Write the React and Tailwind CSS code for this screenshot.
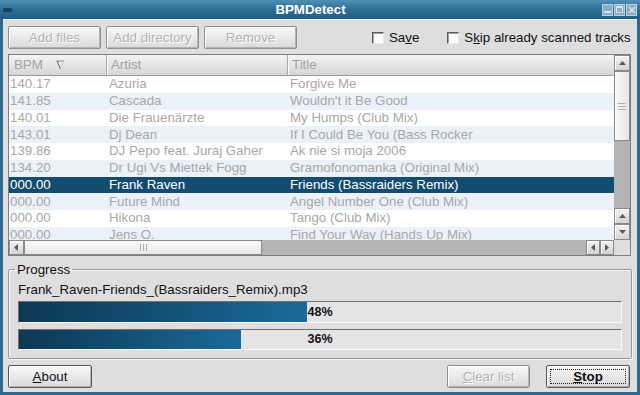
import React from "react";

const rows = [
  ["140.17", "Azuria", "Forgive Me"],
  ["141.85", "Cascada", "Wouldn't it Be Good"],
  ["140.01", "Die Frauenärzte", "My Humps (Club Mix)"],
  ["143.01", "Dj Dean", "If I Could Be You (Bass Rocker"],
  ["139.86", "DJ Pepo feat. Juraj Gaher", "Ak nie si moja 2006"],
  ["134.20", "Dr Ugi Vs Miettek Fogg", "Gramofonomanka (Original Mix)"],
  ["000.00", "Frank Raven", "Friends (Bassraiders Remix)"],
  ["000.00", "Future Mind", "Angel Number One (Club Mix)"],
  ["000.00", "Hikona", "Tango (Club Mix)"],
  ["000.00", "Jens O.", "Find Your Way (Hands Up Mix)"],
];

const bars = [
  { value: 47.8, label: "48%" },
  { value: 36.9, label: "36%" },
];

function Btn({ children, disabled, className = "", focus }) {
  return (
    <div
      className={
        "relative flex h-[23px] shrink-0 items-center justify-center whitespace-nowrap rounded-[2px] border bg-gradient-to-b from-[#f8f8f8] to-[#dadada] text-[13.3px] shadow-[inset_1px_1px_0_#ffffff,inset_-1px_-1px_0_#b4b4b4] " +
        (disabled
          ? "border-[#8e8e8e] text-[#b3b3b3] [text-shadow:1px_1px_0_#ffffff] "
          : "border-[#555555] text-[#111111] ") +
        className
      }
    >
      {focus && (
        <div className="pointer-events-none absolute inset-[3px] border border-dotted border-[#222222]" />
      )}
      {children}
    </div>
  );
}

function Check({ children }) {
  return (
    <div className="flex shrink-0 items-center gap-[5px] whitespace-nowrap text-[13.3px] text-[#111111]">
      <div className="h-[12px] w-[12px] shrink-0 border border-t-[#5c5c5c] border-l-[#5c5c5c] border-b-[#e8e8e8] border-r-[#e8e8e8] bg-white shadow-[inset_1px_1px_0_#a0a0a0]" />
      <span>{children}</span>
    </div>
  );
}

function Arrow({ dir }) {
  const pts = {
    up: "1,6 4.5,2 8,6",
    down: "1,2 4.5,6 8,2",
    left: "6,1 2,4.5 6,8",
    right: "2,1 6,4.5 2,8",
  }[dir];
  return (
    <svg width="9" height="9" viewBox="0 0 9 9">
      <polygon points={pts} fill="#5a5a5a" />
    </svg>
  );
}

function ScrollBtn({ dir, className = "" }) {
  return (
    <div
      className={
        "flex shrink-0 items-center justify-center border border-[#8a8a8a] bg-gradient-to-b from-[#f2f2f2] to-[#d4d4d4] shadow-[inset_1px_1px_0_#ffffff] " +
        className
      }
    >
      <Arrow dir={dir} />
    </div>
  );
}

export default function App() {
  return (
    <div className="flex h-[395px] w-[640px] flex-col bg-[#2c6a90] font-['Liberation_Sans',Arial,sans-serif]">
      {/* title bar */}
      <div className="flex h-[19px] items-center bg-gradient-to-b from-[#4f8fb5] via-[#2e6f96] to-[#205e84] px-[3px]">
        <div className="flex w-[16px] items-center">
          <div className="h-[4px] w-[9px] rounded-[1px] bg-[#1b4460]" />
        </div>
        <div className="flex-1 text-center text-[13.3px] font-bold text-white">BPMDetect</div>
        <div className="flex items-center gap-[1px]">
          <div className="flex h-[12px] w-[11px] items-end justify-center border border-[#bcd0dd] bg-[#8cabc0] pb-[2px]">
            <div className="h-[2px] w-[7px] bg-[#d8e4ec]" />
          </div>
          <div className="flex h-[12px] w-[11px] items-center justify-center border border-[#bcd0dd] bg-[#8cabc0]">
            <div className="h-[7px] w-[7px] border border-t-2 border-[#d8e4ec]" />
          </div>
          <div className="flex h-[12px] w-[11px] items-center justify-center border border-[#bcd0dd] bg-[#8cabc0]">
            <svg width="8" height="8" viewBox="0 0 8 8">
              <path d="M1 1 L7 7 M7 1 L1 7" stroke="#d8e4ec" strokeWidth="1.6" />
            </svg>
          </div>
        </div>
      </div>

      {/* body */}
      <div className="mx-[3px] mb-[3px] flex flex-1 flex-col bg-[#dedede] px-[5px] shadow-[inset_0_1px_0_#f4f4f4]">
        {/* toolbar */}
        <div className="mt-[7px] flex h-[23px] items-center">
          <Btn disabled className="w-[93px]">Add files</Btn>
          <Btn disabled className="ml-[5px] w-[93px]">Add directory</Btn>
          <Btn disabled className="ml-[5px] w-[93px]">Remove</Btn>
          <div className="ml-[75px] shrink-0">
            <Check>
              Sa<span className="underline">v</span>e
            </Check>
          </div>
          <div className="ml-[28px] shrink-0">
            <Check>
              S<span className="underline">k</span>ip already scanned tracks
            </Check>
          </div>
        </div>

        {/* table */}
        <div className="mt-[5px] flex h-[202px] w-[623px] flex-col border border-[#7e7e7e] bg-white">
          <div className="flex h-[185px]">
            <div className="flex flex-1 flex-col overflow-hidden">
              <div className="flex h-[21px] shrink-0 border-b border-[#9a9a9a] bg-gradient-to-b from-[#f4f4f4] to-[#d6d6d6] text-[13.3px] text-[#a3a3a3]">
                <div className="flex w-[98px] items-center border-r border-[#a8a8a8] pl-[5px]">
                  <span>BPM</span>
                  <svg className="ml-[13px]" width="9" height="10" viewBox="0 0 9 10">
                    <path d="M0.5 1 H8" stroke="#8a8a8a" strokeWidth="1" />
                    <path d="M1 1 L4.5 9" stroke="#6a6a6a" strokeWidth="1" />
                    <path d="M8 1 L5 8" stroke="#d0d0d0" strokeWidth="1" />
                  </svg>
                </div>
                <div className="flex w-[181px] items-center border-r border-[#a8a8a8] pl-[4px] shadow-[inset_1px_0_0_#ffffff]">
                  Artist
                </div>
                <div className="flex flex-1 items-center pl-[4px] shadow-[inset_1px_0_0_#ffffff]">Title</div>
              </div>
              <div className="flex-1 overflow-hidden">
                {rows.map((r, i) => {
                  const sel = i === 6;
                  return (
                    <div
                      key={i}
                      className={
                        "flex h-[16.75px] items-center whitespace-nowrap text-[13.3px] " +
                        (sel
                          ? "bg-[#124d71] text-white"
                          : i % 2 === 1
                          ? "bg-[#ebf1f8] text-[#a8a8a8]"
                          : "bg-white text-[#a8a8a8]")
                      }
                    >
                      <div className="w-[98px] pl-[1px]">{r[0]}</div>
                      <div className="w-[181px] pl-[2px]">{r[1]}</div>
                      <div className="flex-1 pl-[2px]">{r[2]}</div>
                    </div>
                  );
                })}
              </div>
            </div>
            {/* vertical scrollbar */}
            <div className="flex w-[16px] flex-col bg-[#b4b4b4]">
              <ScrollBtn dir="up" className="h-[16px]" />
              <div className="flex h-[70px] shrink-0 flex-col items-center justify-center gap-[2px] border border-[#8a8a8a] bg-gradient-to-r from-[#fafafa] to-[#e6e6e6]">
                <div className="h-[1px] w-[8px] bg-[#b0b0b0]" />
                <div className="h-[1px] w-[8px] bg-[#b0b0b0]" />
                <div className="h-[1px] w-[8px] bg-[#b0b0b0]" />
              </div>
              <div className="flex-1" />
              <ScrollBtn dir="up" className="h-[16px]" />
              <ScrollBtn dir="down" className="h-[16px]" />
            </div>
          </div>
          <div className="flex h-[15px]">
            <div className="flex flex-1 bg-[#b4b4b4]">
              <ScrollBtn dir="left" className="w-[15px]" />
              <div className="flex w-[238px] shrink-0 items-center justify-center gap-[2px] border border-[#8a8a8a] bg-gradient-to-b from-[#fafafa] to-[#e6e6e6]">
                <div className="h-[7px] w-[1px] bg-[#b0b0b0]" />
                <div className="h-[7px] w-[1px] bg-[#b0b0b0]" />
                <div className="h-[7px] w-[1px] bg-[#b0b0b0]" />
              </div>
              <div className="flex-1" />
              <ScrollBtn dir="left" className="w-[14px]" />
              <ScrollBtn dir="right" className="w-[14px]" />
            </div>
            <div className="w-[16px] bg-[#dedede]" />
          </div>
        </div>

        {/* progress group */}
        <fieldset className="mt-[6px] h-[97px] w-[622px] rounded-[2px] border border-[#9a9a9a] px-[9px] shadow-[inset_1px_1px_0_#f6f6f6,1px_1px_0_#f6f6f6]">
          <legend className="ml-[-3px] px-[2px] text-[13.3px] leading-[15px] text-[#111111]">Progress</legend>
          <div className="mt-[5px] text-[13.3px] leading-[15px] text-[#111111]">
            Frank_Raven-Friends_(Bassraiders_Remix).mp3
          </div>
          {bars.map((b, i) => (
            <div
              key={i}
              className={
                "relative flex w-[604px] border border-t-[#707070] border-l-[#707070] border-b-[#fafafa] border-r-[#fafafa] bg-[#e4e4e4] " +
                (i === 0 ? "mt-[4px] h-[22px]" : "mt-[6px] h-[21px]")
              }
            >
              <div
                className="h-full bg-gradient-to-r from-[#0c3854] to-[#1a6a9a]"
                style={{ width: b.value + "%" }}
              />
              <div className="absolute inset-0 flex items-center justify-center text-[12.5px] font-bold text-[#111111]">
                {b.label}
              </div>
            </div>
          ))}
        </fieldset>

        {/* bottom buttons */}
        <div className="mt-[6px] flex h-[23px] items-center">
          <Btn className="w-[84px]">
            <span>
              <span className="underline">A</span>bout
            </span>
          </Btn>
          <Btn disabled className="ml-auto w-[83px]">
            <span>
              <span className="underline">C</span>lear list
            </span>
          </Btn>
          <Btn focus className="ml-[16px] mr-[2px] w-[84px] font-bold">
            <span>
              <span className="underline">S</span>top
            </span>
          </Btn>
        </div>
      </div>
    </div>
  );
}
